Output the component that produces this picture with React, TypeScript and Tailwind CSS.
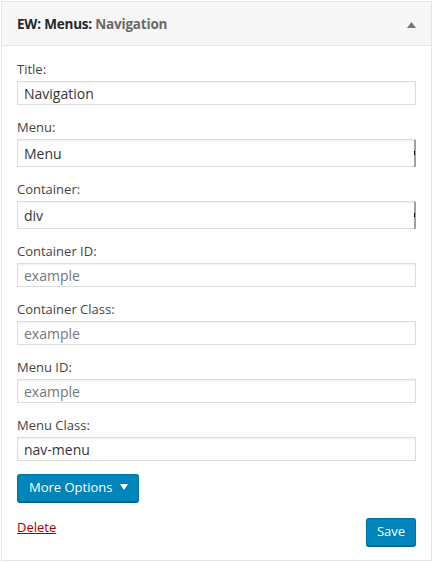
import React from "react";

const font = { fontFamily: '"Open Sans", "Noto Sans", sans-serif' };

function Label({ children }: { children: React.ReactNode }) {
  return <div className="h-[18px] leading-[18px] text-[13px] text-[#444]">{children}</div>;
}

function TextField({ label, value, placeholder }: { label: string; value?: string; placeholder?: string }) {
  return (
    <div className="mb-[13px]">
      <Label>{label}</Label>
      <div className="mt-[3px] h-[24px] w-full border border-[#ddd] shadow-[inset_0_1px_2px_rgba(0,0,0,0.07)] bg-white flex items-center px-[6px]">
        {value ? (
          <span className="text-[14px] text-[#32373c]">{value}</span>
        ) : (
          <span className="text-[14px] text-[#72777c]">{placeholder}</span>
        )}
      </div>
    </div>
  );
}

function SelectField({ label, value }: { label: string; value: string }) {
  return (
    <div className="mb-[13px]">
      <Label>{label}</Label>
      <div className="mt-[3px] h-[28px] w-full border border-[#ddd] shadow-[inset_0_1px_2px_rgba(0,0,0,0.07)] bg-white flex items-center pl-[6px] relative">
        <span className="text-[14px] text-[#32373c]">{value}</span>
        <div className="absolute right-[-1px] top-[0px] bottom-[-1px] w-[2px] bg-[#a0a0a0]" />
        <div className="absolute right-[0px] top-[11px] w-[1px] h-[4px] bg-[#000]" />
      </div>
    </div>
  );
}

export default function App() {
  return (
    <div className="w-[433px] h-[562px] bg-white pt-[1px] pl-[1px]" style={font}>
      <div className="w-[431px] h-[560px] border border-[#e5e5e5] bg-white flex flex-col">
        <div className="h-[44px] border-b border-[#e5e5e5] bg-[#f7f7f7] flex items-center justify-between pl-[15px] pr-[15px] pt-[2px]">
          <div className="text-[13.5px] font-bold text-[#23282d] tracking-[-0.2px]">
            EW: Menus: <span className="text-[#686868]">Navigation</span>
          </div>
          <svg width="9" height="6" viewBox="0 0 9 6">
            <path d="M4.5 0 L9 6 L0 6 Z" fill="#72777c" />
          </svg>
        </div>
        <div className="px-[15px] pt-[14px]">
          <TextField label="Title:" value="Navigation" />
          <SelectField label="Menu:" value="Menu" />
          <SelectField label="Container:" value="div" />
          <TextField label="Container ID:" placeholder="example" />
          <TextField label="Container Class:" placeholder="example" />
          <TextField label="Menu ID:" placeholder="example" />
          <TextField label="Menu Class:" value="nav-menu" />
          <div className="h-[28px] w-[122px] rounded-[3px] bg-[#0085ba] border border-[#0073aa] border-b-[#006799] shadow-[0_1px_0_#006799] flex items-center pl-[11px] text-[13px] text-white">
            More Options
            <svg width="8" height="6" viewBox="0 0 8 6" className="ml-[8px] mb-[3px]">
              <path d="M0 0 L8 0 L4 6 Z" fill="#fff" />
            </svg>
          </div>
          <div className="mt-[16px] flex justify-between items-start">
            <a className="text-[13px] leading-[18px] text-[#a00] underline">Delete</a>
            <div className="h-[28px] w-[50px] rounded-[3px] bg-[#0085ba] border border-[#0073aa] border-b-[#006799] shadow-[0_1px_0_#006799] flex items-center justify-center text-[13px] text-white">
              Save
            </div>
          </div>
        </div>
      </div>
    </div>
  );
}
